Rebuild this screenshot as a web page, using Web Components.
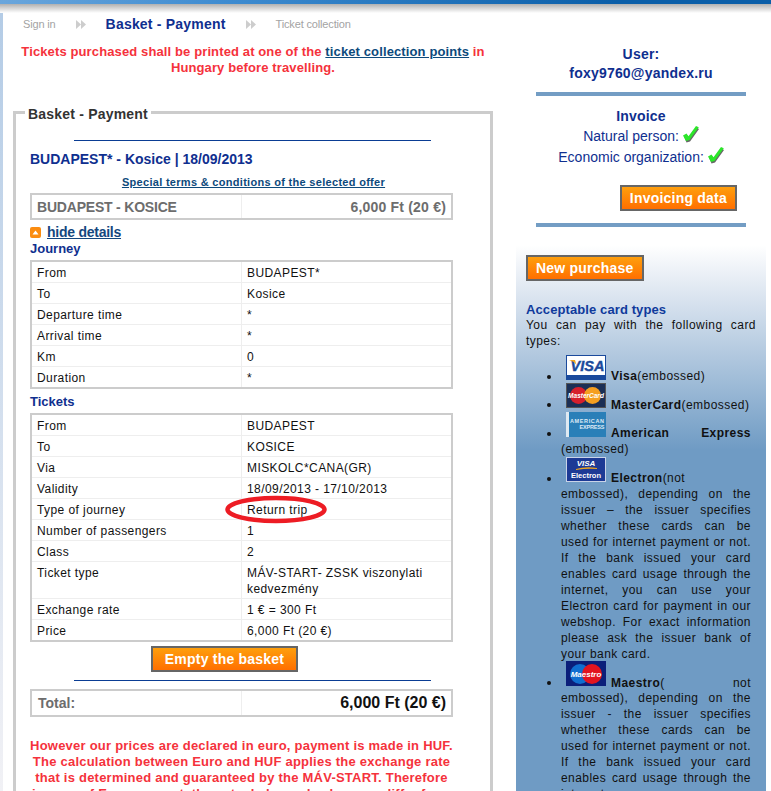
<!DOCTYPE html>
<html>
<head>
<meta charset="utf-8">
<title>Basket - Payment</title>
<style>
html,body{margin:0;padding:0;height:791px;overflow:hidden;background:#fff}
body{font-family:"Liberation Sans",Arial,sans-serif;font-size:12px;color:#111}
shop-table + shop-table{margin-top:5px}
</style>
</head>
<body>
<shop-page>
	<shop-steps slot="main"></shop-steps>
	<shop-notice slot="main" top>Tickets purchased shall be printed at one of the <a href="#" style="color:#0d4a7c">ticket collection points</a> in<br>Hungary before travelling.</shop-notice>
	<shop-box slot="main" legend="Basket - Payment">
		<shop-rule></shop-rule>
		<shop-offer></shop-offer>
		<shop-table rows='[["From","BUDAPEST*"],["To","Kosice"],["Departure time","*"],["Arrival time","*"],["Km","0"],["Duration","*"]]' title="Journey"></shop-table>
		<shop-table mark="5" rows='[["From","BUDAPEST"],["To","KOSICE"],["Via","MISKOLC*CANA(GR)"],["Validity","18/09/2013 - 17/10/2013"],["Type of journey","Return trip"],["Number of passengers","1"],["Class","2"],["Ticket type","MÁV-START- ZSSK viszonylati kedvezmény"],["Exchange rate","1 € = 300 Ft"],["Price","6,000 Ft (20 €)"]]' title="Tickets"></shop-table>
		<shop-total></shop-total>
		<shop-notice>However our prices are declared in euro, payment is made in HUF.<br>The calculation between Euro and HUF applies the exchange rate<br>that is determined and guaranteed by the MÁV-START. Therefore<br>in case of Euro account, the actual charged value may differ from</shop-notice>
	</shop-box>
	<shop-user slot="side"></shop-user>
	<shop-cards slot="side"></shop-cards>
</shop-page>

<script>
const BLUE = "#0f2f8f";

class ShopPage extends HTMLElement {
	constructor() {
		super();
		this.attachShadow({ mode: "open" }).innerHTML = `
			<style>
				:host{display:block;width:771px;height:791px;overflow:hidden;background:#fff}
				.top{height:4px;background:linear-gradient(90deg,#6aa6dc 0,#3d8bd0 30%,#0a5ea8 80%,#0a5ea8 100%)}
				.shade{height:9px;background:linear-gradient(#b0b0b0,#fff)}
				.wrap{display:flex;height:778px;background:linear-gradient(#b4cce6,#f1f1f5) no-repeat 0 0/3px 100%}
				.main{width:516px;flex:none;box-sizing:border-box;padding:0 23px 0 13px}
				.side{width:250px;flex:none}
			</style>
			<div class="top"></div>
			<div class="shade"></div>
			<div class="wrap">
				<div class="main"><slot name="main"></slot><slot></slot></div>
				<div class="side"><slot name="side"></slot></div>
			</div>`;
	}
}

class ShopSteps extends HTMLElement {
	constructor() {
		super();
		const arrows = `<svg width="10" height="9" viewBox="0 0 10 9"><path d="M0 0l5 4.500L0 9zM5 0l5 4.500L5 9z" fill="#cdcdcd"/></svg>`;
		this.attachShadow({ mode: "open" }).innerHTML = `
			<style>
				:host{display:flex;align-items:center;gap:20px;height:22px;margin:0 0 0 10px;color:#a3a3a3;font-size:11px;letter-spacing:-.15px}
				b{color:${BLUE};font-size:14px;letter-spacing:.2px}
			</style>
			<span>Sign in</span>${arrows}<b>Basket - Payment</b>${arrows}<span>Ticket collection</span>`;
	}
}

class ShopNotice extends HTMLElement {
	constructor() {
		super();
		this.attachShadow({ mode: "open" }).innerHTML = `
			<style>
				:host{display:block;color:#f5323c;font-weight:bold;font-size:13px;line-height:16px;text-align:center;letter-spacing:.23px;margin:21px -4px 0;white-space:nowrap}
				:host([top]){margin:9px 0 35px 0;letter-spacing:.12px}
			</style>
			<slot></slot>`;
	}
}

class ShopBox extends HTMLElement {
	constructor() {
		super();
		this.attachShadow({ mode: "open" }).innerHTML = `
			<style>
				:host{display:block;position:relative;border:3px solid #ccc;border-bottom:0;padding:20px 37px 0 14px;width:480px;box-sizing:border-box;height:700px}
				.legend{position:absolute;left:9px;top:-8px;background:#fff;padding:0 3px;color:#333;font-weight:bold;font-size:14px;letter-spacing:.2px;line-height:16px}
			</style>
			<div class="legend">${this.getAttribute("legend")}</div>
			<slot></slot>`;
	}
}

class ShopRule extends HTMLElement {
	constructor() {
		super();
		this.attachShadow({ mode: "open" }).innerHTML = `
			<style>:host{display:block;width:357px;height:1px;background:#0a3d94;margin:6px 0 0 44px}</style>`;
	}
}

class ShopOffer extends HTMLElement {
	constructor() {
		super();
		this.attachShadow({ mode: "open" }).innerHTML = `
			<style>
				:host{display:block}
				h3{margin:10px 0 0;color:${BLUE};font-size:14px;line-height:16px}
				.terms{text-align:center;margin-top:8px;font-size:11px;line-height:15px;font-weight:bold;letter-spacing:.3px;padding-left:24px}
				.terms a{color:#0d4a7c}
				.row{display:flex;align-items:center;border:2px solid #ccc;margin-top:3px;width:423px;font-weight:bold;font-size:14px;color:#6d6d6d;box-sizing:border-box;height:27px}
				.row span{padding:0 5px}
				.row .l{width:210px;box-sizing:border-box;border-right:1px solid #eee;height:100%;display:flex;align-items:center;letter-spacing:-.2px}
				.row .r{flex:1;text-align:right;letter-spacing:.2px}
				.toggle{display:flex;align-items:center;margin:4px 0 1px;height:16px;font-size:14px;font-weight:bold}
				.toggle a{color:#14477f;margin-left:6px;letter-spacing:-.25px}
				.toggle svg{flex:none}
			</style>
			<h3>BUDAPEST* - Kosice | 18/09/2013</h3>
			<div class="terms"><a href="#">Special terms &amp; conditions of the selected offer</a></div>
			<div class="row"><span class="l">BUDAPEST - KOSICE</span><span class="r">6,000 Ft (20 €)</span></div>
			<div class="toggle"><svg width="11" height="11" viewBox="0 0 11 11"><rect width="11" height="11" rx="2" fill="#fb8c10"/><path d="M2.500 7.500L5.500 3.500 8.500 7.500z" fill="#fff"/></svg><a href="#">hide details</a></div>`;
	}
}

class ShopTable extends HTMLElement {
	constructor() {
		super();
		const rows = JSON.parse(this.getAttribute("rows"));
		const mark = Number(this.getAttribute("mark"));
		const body = rows
			.map((r, i) => {
				const ring =
					i + 1 === mark
						? `<svg class="ring" width="102" height="29" viewBox="0 0 102 29"><ellipse cx="51" cy="14.500" rx="48.500" ry="11.500" fill="none" stroke="#ed1c24" stroke-width="4.500"/></svg>`
						: "";
				return `<tr><td class="k">${r[0]}</td><td class="v">${r[1]}${ring}</td></tr>`;
			})
			.join("");
		this.attachShadow({ mode: "open" }).innerHTML = `
			<style>
				:host{display:block}
				h4{margin:0;color:${BLUE};font-size:13px;line-height:16px;height:16px}
				table{border-collapse:collapse;border:2px solid #ccc;width:423px;table-layout:fixed;margin-top:3px;font-size:12px;color:#111}
				td{border:1px solid #eee;padding:3px 5px 1px;line-height:16px;vertical-align:top;letter-spacing:.42px}
				td.k{width:199px}
				td.v{position:relative}
				.ring{position:absolute;left:-17px;top:-4px;z-index:1}
			</style>
			<h4>${this.getAttribute("title")}</h4>
			<table>${body}</table>`;
	}
}

class ShopButton extends HTMLElement {
	constructor() {
		super();
		this.attachShadow({ mode: "open" }).innerHTML = `
			<style>
				:host{display:inline-block;box-sizing:border-box;border:2px solid #666;background:linear-gradient(#fe9f0d,#ff6f00);color:#fff;font-weight:bold;font-size:14px;line-height:22px;height:26px;padding:0 var(--pad,8px);text-align:center;letter-spacing:.22px}
			</style>
			<slot></slot>`;
	}
}

class ShopTotal extends HTMLElement {
	constructor() {
		super();
		this.attachShadow({ mode: "open" }).innerHTML = `
			<style>
				:host{display:block;--pad:12px}
				.btn{text-align:center;margin:4px 0 0 -34px;height:26px}
				.rule{width:357px;height:1px;background:#0a3d94;margin:8px 0 0 44px}
				.row{display:flex;border:2px solid #ccc;width:423px;height:28px;box-sizing:border-box;margin-top:8px;font-weight:bold;align-items:stretch}
				.l{width:210px;box-sizing:border-box;border-right:1px solid #eee;padding-left:6px;font-size:14px;color:#6d6d6d;display:flex;align-items:center}
				.r{flex:1;padding-right:5px;font-size:16px;color:#111;display:flex;align-items:center;justify-content:flex-end}
			</style>
			<div class="btn"><shop-button>Empty the basket</shop-button></div>
			<div class="rule"></div>
			<div class="row"><span class="l">Total:</span><span class="r">6,000 Ft (20 €)</span></div>`;
	}
}

class ShopUser extends HTMLElement {
	constructor() {
		super();
		const tick = `<svg width="16" height="17" viewBox="0 0 16 17"><path d="M1 10.500L4 9 6 11.500 13.500 1.500 16 3 7 15.500 3.500 16.500z" fill="#666"/><path d="M0 9.500L3.500 7.500 5.500 10.200 13 0 15.800 1.200 6.500 14 3 15z" fill="#2ce62a"/></svg>`;
		this.attachShadow({ mode: "open" }).innerHTML = `
			<style>
				:host{display:block;color:${BLUE};text-align:center;width:210px;margin-left:20px;height:232px;font-size:14px}
				.u{font-weight:bold;line-height:19px;padding-top:32px;letter-spacing:.2px}
				hr{border:0;height:4px;background:#739dc4;margin:0}
				.u + hr{margin-top:9px}
				.inv{margin-top:11px;line-height:21px;height:60px}
				.inv b{display:block;line-height:19px;letter-spacing:.2px}
				svg{vertical-align:-2px}
				.act{text-align:right;margin:18px 9px 12px 0;height:26px}
			</style>
			<div class="u">User:<br>foxy9760@yandex.ru</div>
			<hr>
			<div class="inv"><b>Invoice</b>Natural person: ${tick}<br>Economic organization: ${tick}</div>
			<div class="act"><shop-button>Invoicing data</shop-button></div>
			<hr>`;
	}
}

class ShopCards extends HTMLElement {
	constructor() {
		super();
		const font = `font-family="Liberation Sans" font-weight="bold" text-anchor="middle"`;
		const visa = `<svg width="40" height="25" viewBox="0 0 40 25"><rect width="40" height="25" fill="#1a4a9c"/><rect x="1" y="1" width="38" height="19" fill="#fff"/><text x="21.500" y="16" ${font} font-style="italic" font-size="14.500" stroke="#1a4a9c" stroke-width=".4" fill="#1a4a9c">VISA</text><path d="M3 5h6l1.500 5q-2-3.500-7.500-5z" fill="#f0a51e"/></svg>`;
		const mc = `<svg width="40" height="25" viewBox="0 0 40 25"><rect width="40" height="25" fill="#1b2f55"/><rect x=".5" y=".5" width="39" height="24" fill="none" stroke="#555"/><circle cx="12.500" cy="12.500" r="8.500" fill="#d61f2c"/><circle cx="26.500" cy="12.500" r="8.500" fill="#f59f20"/><text x="20" y="15" ${font} font-style="italic" font-size="6.500" fill="#fff">MasterCard</text></svg>`;
		const amex = `<svg width="40" height="25" viewBox="0 0 40 25"><rect width="40" height="25" fill="#2a7fb8"/><rect width="3" height="25" fill="#dfe9f2"/><text x="21" y="11" ${font} font-size="5.500" textLength="34" fill="#dfeaf5">AMERICAN</text><text x="26" y="17" ${font} font-size="5.500" textLength="25" fill="#dfeaf5">EXPRESS</text></svg>`;
		const electron = `<svg width="40" height="25" viewBox="0 0 40 25"><rect width="40" height="25" fill="#fff"/><rect x=".5" y=".5" width="39" height="24" fill="#1d3a95" stroke="#c9d3e8"/><text x="20" y="9" ${font} font-style="italic" font-size="8" fill="#fff">VISA</text><path d="M10 12q10-3 21-1v1q-10-1-21 1z" fill="#f0a51e"/><text x="20" y="21" ${font} font-size="7.500" fill="#fff">Electron</text></svg>`;
		const maestro = `<svg width="40" height="25" viewBox="0 0 40 25"><rect width="40" height="25" fill="#0b1f7a"/><circle cx="14" cy="13" r="10" fill="#0f6fd0"/><circle cx="26" cy="13" r="10" fill="#e2141f"/><text x="20" y="15.500" ${font} font-style="italic" font-size="8" fill="#fff">Maestro</text></svg>`;
		this.attachShadow({ mode: "open" }).innerHTML = `
			<style>
				:host{display:block;height:560px;overflow:hidden;background:linear-gradient(#fff 0,#e3eaf3 40px,#6f9bc4 205px,#6f9bc4 100%);padding:10px 10px 0;box-sizing:border-box;font-size:12px;line-height:16px;color:#111;letter-spacing:.45px}
				.btn{height:26px;margin-bottom:21px}
				h4{margin:0;color:#0f3a9c;font-size:13px;line-height:15px;letter-spacing:.1px}
				p{margin:0;text-align:justify}
				ul{margin:6px 5px 0 0;padding:0 0 0 35px;text-align:justify}
				li svg{margin:-.34px 5px 0;vertical-align:baseline;letter-spacing:0}
				.first{text-align-last:justify}
			</style>
			<div class="btn"><shop-button>New purchase</shop-button></div>
			<h4>Acceptable card types</h4>
			<p>You can pay with the following card types:</p>
			<ul>
				<li>${visa}<b>Visa</b>(embossed)</li>
				<li>${mc}<b>MasterCard</b>(embossed)</li>
				<li>${amex}<b>American Express</b> (embossed)</li>
				<li>${electron}<b>Electron</b>(not<br>embossed), depending on the issuer – the issuer specifies whether these cards can be used for internet payment or not. If the bank issued your card enables card usage through the internet, you can use your Electron card for payment in our webshop. For exact information please ask the issuer bank of your bank card.</li>
				<li><div class="first">${maestro}<b>Maestro</b>( not</div>embossed), depending on the issuer - the issuer specifies whether these cards can be used for internet payment or not. If the bank issued your card enables card usage through the internet, you can use your Maestro card for payment in our webshop.</li>
			</ul>`;
	}
}

customElements.define("shop-page", ShopPage);
customElements.define("shop-steps", ShopSteps);
customElements.define("shop-notice", ShopNotice);
customElements.define("shop-box", ShopBox);
customElements.define("shop-rule", ShopRule);
customElements.define("shop-offer", ShopOffer);
customElements.define("shop-table", ShopTable);
customElements.define("shop-button", ShopButton);
customElements.define("shop-total", ShopTotal);
customElements.define("shop-user", ShopUser);
customElements.define("shop-cards", ShopCards);
</script>
</body>
</html>
